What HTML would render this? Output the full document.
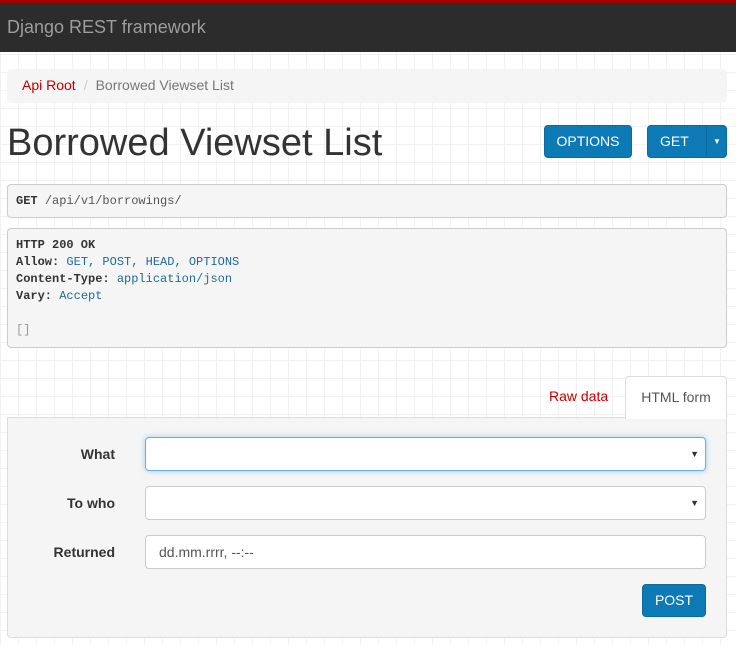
<!DOCTYPE html>
<html><head><style>
*{box-sizing:border-box}
body{margin:0;width:736px;height:645px;overflow:hidden;font-family:"Liberation Sans",sans-serif;font-size:14px;color:#333;background:#fff;
background-image:linear-gradient(#f1f1f1 1px,transparent 1px),linear-gradient(90deg,#f1f1f1 1px,transparent 1px);background-size:18px 18px;}
.nav{position:absolute;left:0;top:0;width:736px;height:52px;background:#2c2c2c;border-top:3px solid #a30000}
.nav span{position:absolute;left:7px;top:14px;font-size:18px;color:#9d9d9d}
.bc{position:absolute;left:7px;top:69px;width:720px;height:34px;background:#f5f5f5;border-radius:4px;padding:8px 15px;}
.bc a{color:#c20000}.bc .s{color:#ccc;padding:0 8px}.bc .c{color:#777}
h1{position:absolute;left:7px;top:121px;margin:0;font-size:38px;font-weight:400;line-height:44px;color:#333}
.btn{position:absolute;background:#2c7fba;background:#0d7ab5;color:#fff;border:1px solid #0b6a9e;border-radius:4px;font-size:14px;text-align:center;line-height:31px;height:33px}
.pre{position:absolute;left:7px;width:720px;background:#f5f5f5;border:1px solid #ccc;border-radius:4px;font-family:"Liberation Mono",monospace;font-size:12px;padding:8px;line-height:17px;color:#333}
.pre b{font-weight:bold}.pre .v{color:#1e6b99}
.tab{position:absolute;top:376px;height:42px;line-height:40px;font-size:14px}
.panel{position:absolute;left:7px;top:417px;width:720px;height:221px;background:#f5f5f5;border:1px solid #ddd;border-radius:0 0 4px 4px}
.lbl{position:absolute;width:108px;text-align:right;font-weight:bold;left:7px;font-size:14px}
.inp{position:absolute;left:145px;width:561px;height:34px;background:#fff;border:1px solid #ccc;border-radius:4px;padding:0 13px;line-height:32px;color:#555}
.arr{position:absolute;right:6px;top:0;font-size:9px;color:#333}
</style></head><body>
<div class="nav"><span>Django REST framework</span></div>
<div class="bc"><a>Api Root</a><span class="s">/</span><span class="c">Borrowed Viewset List</span></div>
<h1>Borrowed Viewset List</h1>
<div class="btn" style="left:544px;top:125px;width:88px">OPTIONS</div>
<div class="btn" style="left:647px;top:125px;width:80px;text-align:left;padding-left:12px">GET<span style="position:absolute;left:58px;top:0;height:31px;border-left:1px solid #0b6a9e;width:21px;text-align:center;font-size:8px">▼</span></div>
<div class="pre" style="top:184px;height:34px;line-height:16px"><b>GET</b> <span style="color:#555">/api/v1/borrowings/</span></div>
<div class="pre" style="top:228px;height:120px"><b>HTTP 200 OK</b><br><b>Allow:</b> <span class="v">GET, POST, HEAD, OPTIONS</span><br><b>Content-Type:</b> <span class="v">application/json</span><br><b>Vary:</b> <span class="v">Accept</span><br><br><span style="color:#999">[]</span></div>
<div class="tab" style="left:549px;color:#c20000">Raw data</div>
<div class="tab" style="left:625px;width:102px;background:#fff;border:1px solid #ddd;border-bottom:none;border-radius:4px 4px 0 0;text-align:center;color:#555;z-index:2;height:43px">HTML form</div>
<div class="panel"></div>
<div class="lbl" style="top:446px">What</div>
<div class="inp" style="top:437px;border-color:#66afe9;box-shadow:0 0 6px rgba(102,175,233,.6)"><span class="arr">▼</span></div>
<div class="lbl" style="top:495px">To who</div>
<div class="inp" style="top:486px"><span class="arr">▼</span></div>
<div class="lbl" style="top:544px">Returned</div>
<div class="inp" style="top:535px">dd.mm.rrrr, --:--</div>
<div class="btn" style="left:642px;top:584px;width:64px">POST</div>
</body></html>
